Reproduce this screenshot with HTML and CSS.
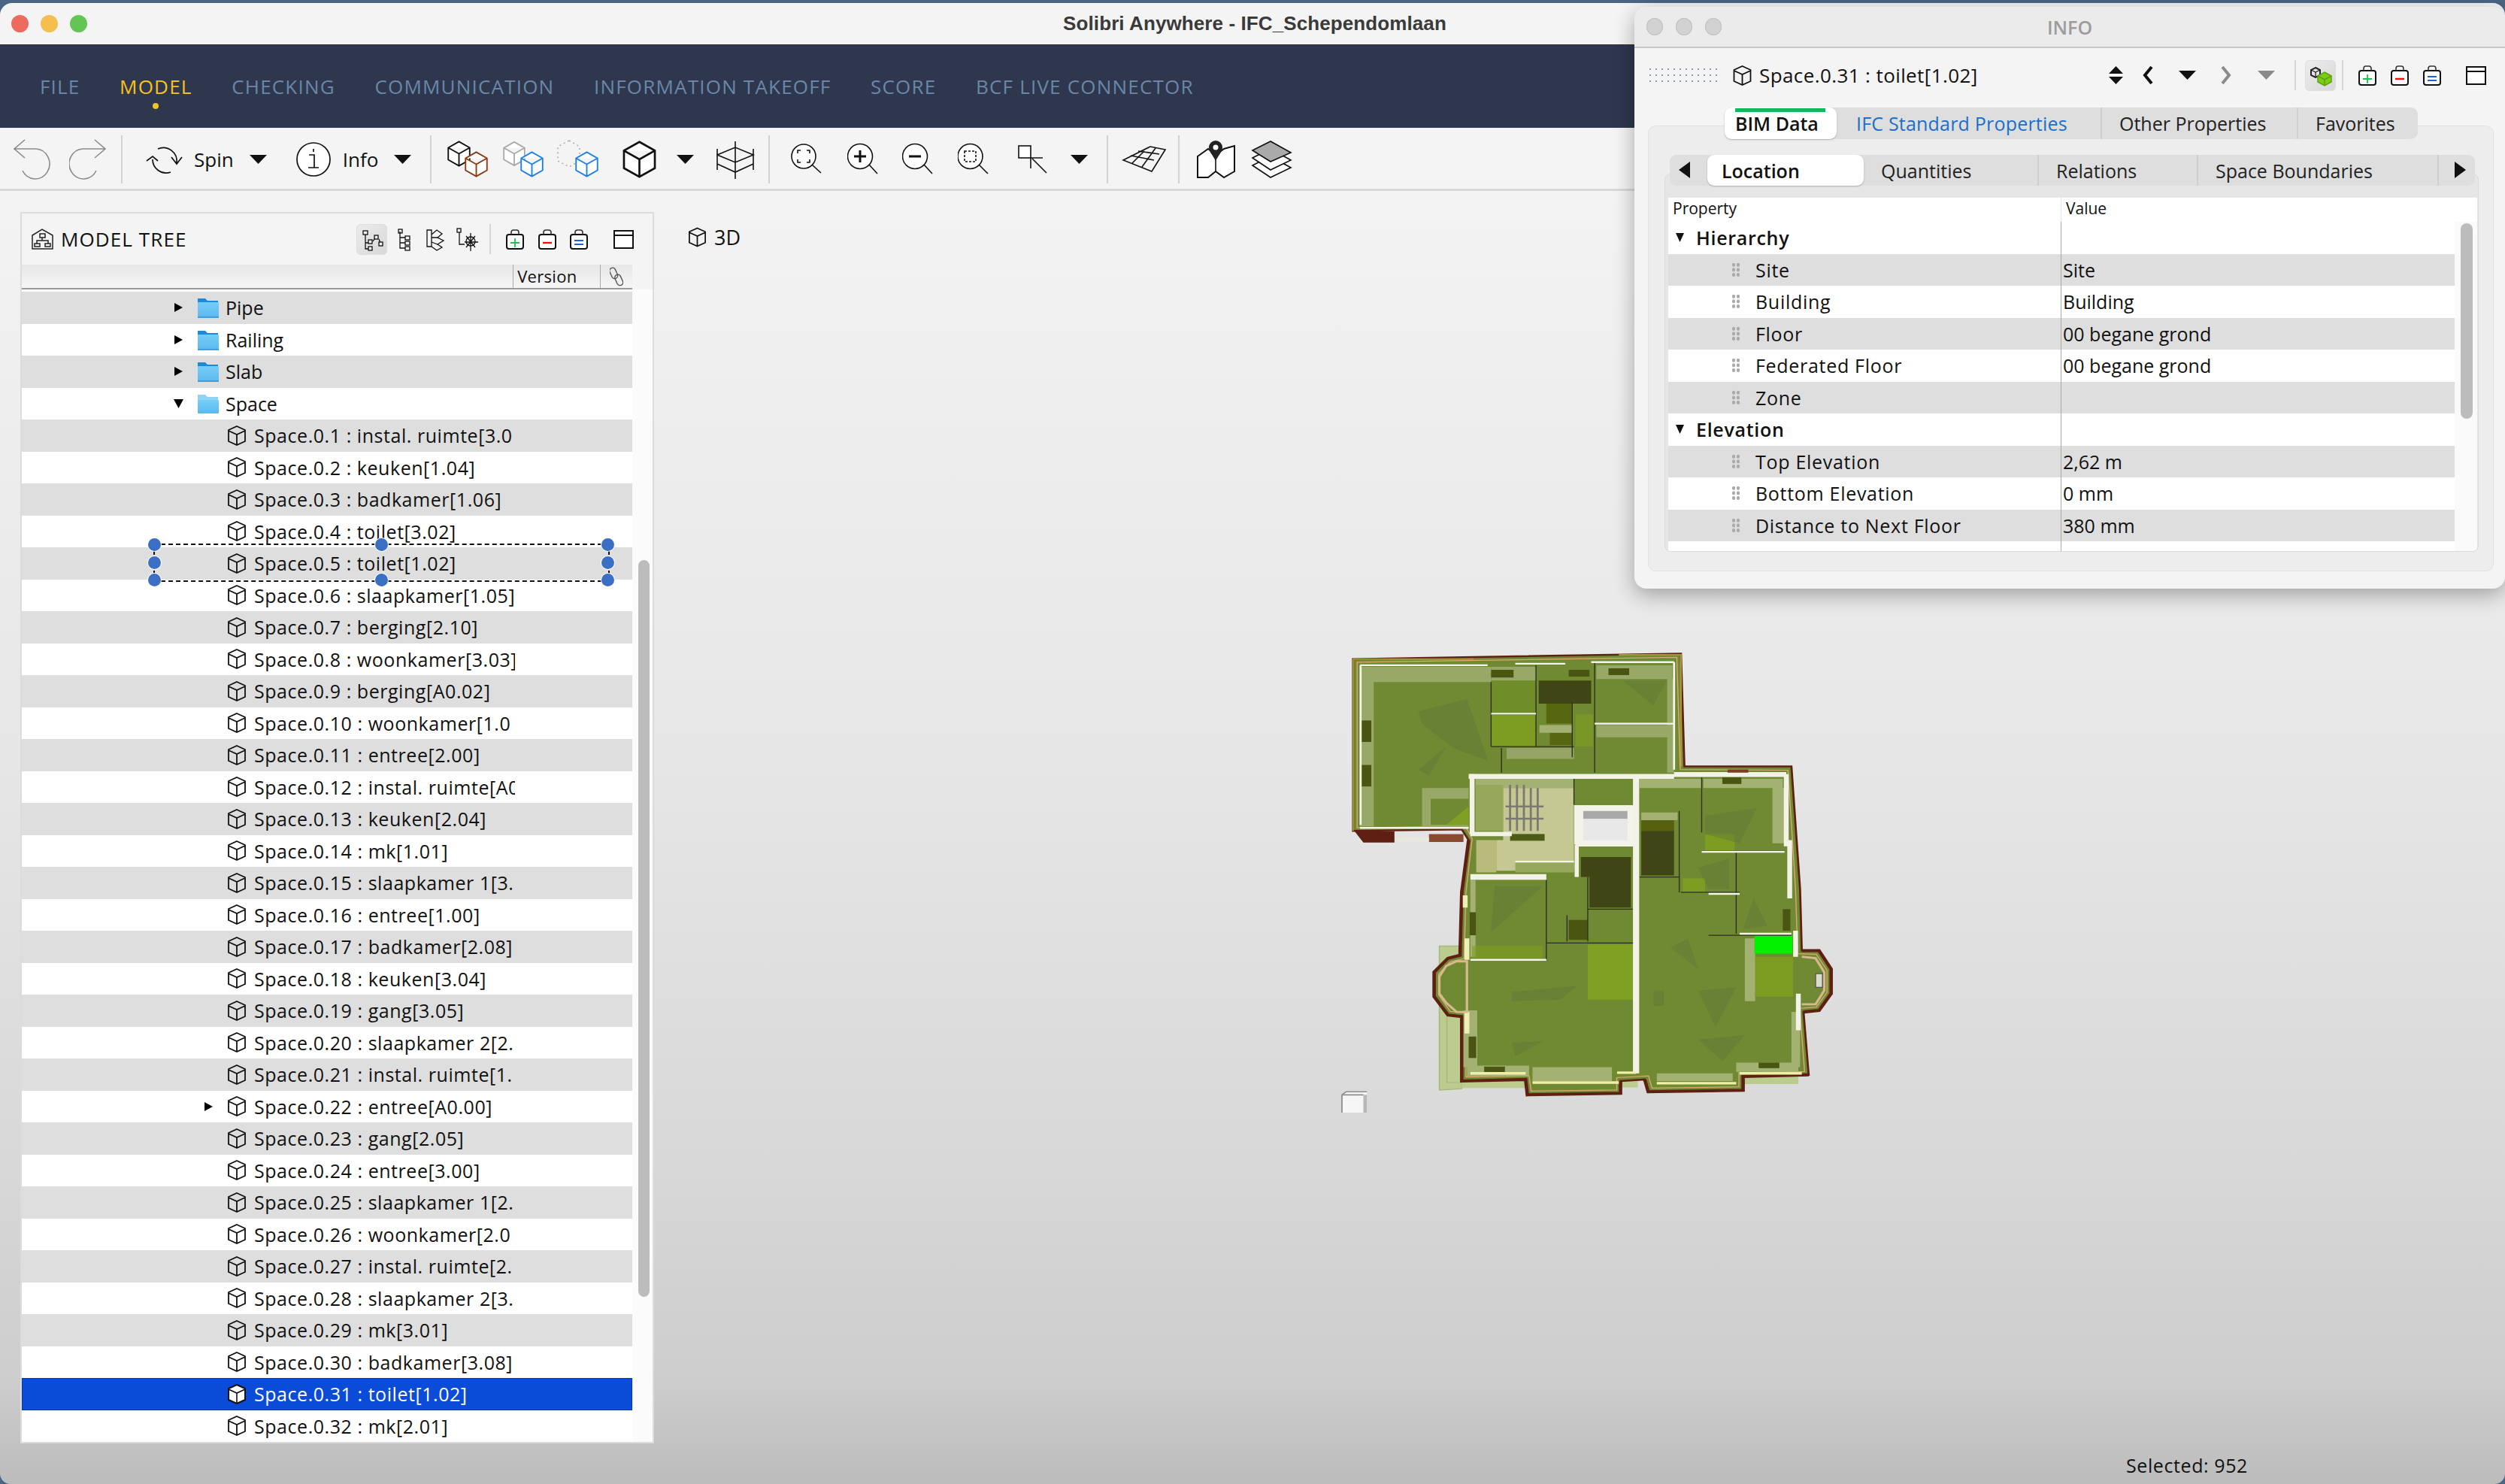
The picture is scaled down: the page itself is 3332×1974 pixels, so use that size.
FILE: index.html
```html
<!DOCTYPE html>
<html lang="en">
<head>
  <meta charset="UTF-8">
  <title>Solibri Anywhere - IFC_Schependomlaan</title>
  <link rel="stylesheet" href="styles.css">
</head>
<body>
  <svg class="defs" width="0" height="0">
    <symbol id="cube" viewBox="0 0 50 56">
      <path d="M25 2 48 15V41L25 54 2 41V15Z M2 15 25 28 48 15M25 28V54" fill="#fff" stroke="currentColor" stroke-width="3"/>
    </symbol>
    <symbol id="leaf" viewBox="0 0 28 27">
      <path d="M14 1 25 6V21L14 26 3 21V6Z M3 7 14 12 25 7M14 12V26" fill="none" stroke="currentColor" stroke-width="1.8"/>
    </symbol>
    <symbol id="leaf-sel" viewBox="0 0 28 27">
      <path d="M14 1 25 6V21L14 26 3 21V6Z" fill="#fff" stroke="#111" stroke-width="2"/>
      <path d="M3 7 14 12 25 7M14 12V26" fill="none" stroke="#111" stroke-width="1.6"/>
    </symbol>
    <linearGradient id="fold" x1="0" y1="0" x2="0" y2="1">
      <stop offset="0" stop-color="#76cdf8"/><stop offset="1" stop-color="#5cb9ef"/>
    </linearGradient>
    <symbol id="folder" viewBox="0 0 29 28">
      <path d="M1 2H11L14 5H28V27H1Z" fill="#1c8ad8"/>
      <rect x="1" y="7" width="28" height="20" rx="1" fill="url(#fold)"/>
      <rect x="1" y="26" width="28" height="2" fill="#3d9fe0"/>
    </symbol>
    <symbol id="folder-open" viewBox="0 0 29 28">
      <path d="M1 2H11L14 5H28V27H1Z" fill="#8fd3f7"/>
      <rect x="1" y="9" width="28" height="18" rx="1" fill="url(#fold)"/>
    </symbol>
    <symbol id="clip" viewBox="0 0 24 27">
      <rect x="1" y="7" width="22" height="19" rx="3" fill="#fff" stroke="#111" stroke-width="2"/>
      <path d="M7 7V4A3 3 0 0 1 10 1H14A3 3 0 0 1 17 4V7" fill="none" stroke="#333" stroke-width="1.6"/>
    </symbol>
    <symbol id="win" viewBox="0 0 27 25">
      <rect x="1" y="1" width="25" height="23" fill="#fff" stroke="#111" stroke-width="2"/>
      <path d="M1 7H26" stroke="#111" stroke-width="2"/>
    </symbol>
    <symbol id="caret" viewBox="0 0 23 12">
      <path d="M0 0H23L11.5 12Z" fill="#111"/>
    </symbol>
  </svg>

  <div class="app">
    <div class="titlebar">
      <span class="light red"></span><span class="light yellow"></span><span class="light green"></span>
      <span class="title">Solibri Anywhere - IFC_Schependomlaan</span>
    </div>

    <nav class="nav">
      <a>FILE</a>
      <a class="active">MODEL</a>
      <a>CHECKING</a>
      <a>COMMUNICATION</a>
      <a>INFORMATION TAKEOFF</a>
      <a>SCORE</a>
      <a>BCF LIVE CONNECTOR</a>
    </nav>

    <div class="toolbar">
      <svg width="74" height="81" fill="none" stroke="#8a8a8a" stroke-width="1.6"><path d="M15 14 1 26 15 38M1 26H30A19 20 0 1 1 12 55"/></svg>
      <svg width="69" height="81" fill="none" stroke="#8a8a8a" stroke-width="1.6"><path d="M34 14 48 26 34 38M48 26H18A19 20 0 1 0 36 55"/></svg>
      <div class="sep"></div>
      <svg width="81" height="81" fill="none" stroke="#111" stroke-width="1.7"><path d="M33 26A18 18 0 0 1 58 45M51 37 58 46 65 37M26 40A18 18 0 0 0 50 57M18 42 26 36 33 42"/></svg>
      <span class="tool-label">Spin</span>
      <svg width="61" height="81"><use href="#caret" x="0" y="34" width="23" height="12"/></svg>
      <svg width="63" height="81"><circle cx="24" cy="40" r="22" fill="#fff" stroke="#111" stroke-width="1.7"/><path d="M24 26V30M18 34H25V51M17 51H31" fill="none" stroke="#111" stroke-width="1.7"/></svg>
      <span class="tool-label">Info</span>
      <svg width="48" height="81"><use href="#caret" x="0" y="34" width="23" height="12"/></svg>
      <div class="sep"></div>
      <svg width="79" height="81"><use href="#cube" class="c-black" x="7" y="15" width="31" height="35"/><use href="#cube" class="c-brown" x="30" y="29" width="31" height="35"/></svg>
      <svg width="73" height="81"><use href="#cube" class="c-grey" x="2" y="15" width="30" height="35"/><use href="#cube" class="c-blue" x="25" y="29" width="31" height="35"/></svg>
      <svg width="85" height="81"><path d="M17 15 31 23V42L17 50 2 42V23Z" fill="none" stroke="#aaa" stroke-width="1.5" stroke-dasharray="2 4"/><use href="#cube" class="c-blue" x="25" y="29" width="31" height="35"/></svg>
      <svg width="75" height="81"><use href="#cube" class="c-black" x="0" y="15" width="51" height="50"/></svg>
      <svg width="53" height="81"><use href="#caret" x="0" y="34" width="23" height="12"/></svg>
      <svg width="69" height="81" fill="none" stroke="#111" stroke-width="1.6"><path d="M1 26V54M49 26V54M25 16V66M1 34 25 24 49 34 25 44ZM1 46 25 57 49 46"/></svg>
      <div class="sep"></div>
      <svg width="89" height="81" fill="none" stroke="#111" stroke-width="1.6"><circle cx="31" cy="36" r="16" fill="#fff"/><path d="M42 47 54 58M23 32V28H27M35 28H39V32M39 40V44H35M27 44H23V40"/></svg>
      <svg width="73" height="81" fill="none" stroke="#111" stroke-width="1.6"><circle cx="17" cy="36" r="16.5" fill="#fff"/><path d="M29 47 40 59"/><path d="M9 36H25M17 28V44" stroke-width="3"/></svg>
      <svg width="74" height="81" fill="none" stroke="#111" stroke-width="1.6"><circle cx="17" cy="36" r="16.5" fill="#fff"/><path d="M29 47 40 59"/><path d="M9 36H25" stroke-width="3"/></svg>
      <svg width="80" height="81" fill="none" stroke="#111" stroke-width="1.6"><circle cx="16.5" cy="36" r="16.5" fill="#fff"/><path d="M28 47 40 59"/><rect x="9" y="29" width="15" height="14" stroke-dasharray="3 2"/></svg>
      <svg width="70" height="81" fill="none" stroke="#111" stroke-width="1.6"><rect x="1" y="22" width="16" height="16" fill="#fff"/><path d="M17 38H33M17 38V52M19 39 38 58"/></svg>
      <svg width="48" height="81"><use href="#caret" x="0" y="34" width="23" height="12"/></svg>
      <div class="sep"></div>
      <svg width="79" height="81" fill="none" stroke="#111" stroke-width="1.6"><path d="M6 41 42 23 62 27 44 56ZM16 35 47 41M26 29 54 33M18 45 34 29M31 50 49 25"/></svg>
      <div class="sep"></div>
      <svg width="81" height="81"><path d="M10 36 24 26 34 34 45 26 59 22V56L45 64 34 56 24 64 10 64Z" fill="#fff" stroke="#111" stroke-width="2"/><path d="M34 34V56" stroke="#111" stroke-width="1.6"/><path d="M34 42C30 34 25 30 25 24A9 9 0 0 1 43 24C43 30 38 34 34 42Z" fill="#222"/><circle cx="34" cy="24" r="3.5" fill="#fff"/></svg>
      <svg width="56" height="81" stroke="#111" stroke-width="1.6"><path d="M2 48 26 36 53 51 26 64Z" fill="#fff"/><path d="M2 38 26 26 53 41 26 54Z" fill="#fff"/><path d="M2 28 26 16 53 31 26 43Z" fill="#aaa"/></svg>
    </div>

    <div class="content">
      <section class="tree-panel">
        <header class="tree-head">
          <svg class="tree-logo" width="29" height="28" fill="none" stroke="#222" stroke-width="1.5"><path d="M1 27V9L14 1 28 9V27Z"/><rect x="11" y="7" width="7" height="5"/><path d="M14 12V16M7 20V16H22V20"/><rect x="4" y="20" width="7" height="4"/><rect x="18" y="20" width="7" height="4"/></svg>
          <span class="tree-title">MODEL TREE</span>
          <div class="tree-tools">
            <span class="tool-on">
              <svg width="41" height="41" fill="#f0f0f0" stroke="#111" stroke-width="1.3"><path d="M12 13V33H18M12 25H18M22 23 26 17M30 20 32 25" fill="none"/><rect x="9" y="9" width="6" height="5"/><rect x="16" y="21" width="5" height="5"/><rect x="24" y="15" width="5" height="5"/><rect x="30" y="24" width="5" height="5"/><rect x="16" y="30" width="5" height="5"/></svg>
            </span>
            <svg width="42" height="41" fill="none" stroke="#111" stroke-width="1.3"><path d="M17 10V32H24M17 18H24M17 25H24"/><rect x="15" y="7" width="5" height="5"/><rect x="24" y="16" width="6" height="5"/><rect x="24" y="23" width="6" height="5"/><rect x="24" y="30" width="6" height="5"/></svg>
            <svg width="45" height="41" fill="none" stroke="#111" stroke-width="1.3"><path d="M11 8H17V30H11ZM17 14 24 8 31 13 25 18 33 22 25 27 31 31 24 35 17 30"/><path d="M17 18 25 18M17 24 25 27"/></svg>
            <svg width="47" height="41" fill="none" stroke="#111" stroke-width="1.3"><rect x="6" y="6" width="5" height="5"/><path d="M9 11V27H16M24 12V36M16 24H34M18 16 30 31M30 16 18 31"/><circle cx="24" cy="23" r="6"/></svg>
            <div class="tool-sep"></div>
            <svg class="tsvg" width="43" height="27"><use href="#clip" width="24" height="27"/><path d="M12 12V24M6 18H18" stroke="#1cc24a" stroke-width="1.8"/></svg>
            <svg class="tsvg" width="42" height="27"><use href="#clip" width="24" height="27"/><path d="M6 18H18" stroke="#f01010" stroke-width="2.4"/></svg>
            <svg class="tsvg" width="58" height="27"><use href="#clip" width="24" height="27"/><path d="M6 15H18M6 20H18" stroke="#1d62d8" stroke-width="2"/></svg>
            <svg class="tsvg" width="27" height="25"><use href="#win" width="27" height="25"/></svg>
          </div>
        </header>

        <div class="col-head">
          <span class="col-blank"></span>
          <span class="col-version">Version</span>
          <span class="col-link">
            <svg width="18" height="26" fill="none" stroke="#555" stroke-width="1.4"><rect x="1" y="1" width="8" height="15" rx="4" transform="rotate(-24 5 8)"/><rect x="8" y="10" width="8" height="15" rx="4" transform="rotate(-24 12 17)"/></svg>
          </span>
        </div>

        <div class="tree-body">
          <div class="rows">
            <div class="row folder"><svg class="arrow" width="31" height="16"><path d="M1 2 12 8 1 14Z"/></svg><svg class="ficon" width="38" height="28"><use href="#folder" width="29" height="28"/></svg><span class="label">Pipe</span></div>
            <div class="row folder"><svg class="arrow" width="31" height="16"><path d="M1 2 12 8 1 14Z"/></svg><svg class="ficon" width="38" height="28"><use href="#folder" width="29" height="28"/></svg><span class="label">Railing</span></div>
            <div class="row folder"><svg class="arrow" width="31" height="16"><path d="M1 2 12 8 1 14Z"/></svg><svg class="ficon" width="38" height="28"><use href="#folder" width="29" height="28"/></svg><span class="label">Slab</span></div>
            <div class="row folder"><svg class="arrow" width="31" height="16"><path d="M0 2H13L6.5 14Z"/></svg><svg class="ficon" width="38" height="28"><use href="#folder-open" width="29" height="28"/></svg><span class="label">Space</span></div>
            <div class="row leaf"><svg class="cube" width="28" height="27"><use href="#leaf"/></svg><span class="label">Space.0.1 : instal. ruimte[3.0</span></div>
            <div class="row leaf"><svg class="cube" width="28" height="27"><use href="#leaf"/></svg><span class="label">Space.0.2 : keuken[1.04]</span></div>
            <div class="row leaf"><svg class="cube" width="28" height="27"><use href="#leaf"/></svg><span class="label">Space.0.3 : badkamer[1.06]</span></div>
            <div class="row leaf"><svg class="cube" width="28" height="27"><use href="#leaf"/></svg><span class="label">Space.0.4 : toilet[3.02]</span></div>
            <div class="row leaf"><svg class="cube" width="28" height="27"><use href="#leaf"/></svg><span class="label">Space.0.5 : toilet[1.02]</span></div>
            <div class="row leaf"><svg class="cube" width="28" height="27"><use href="#leaf"/></svg><span class="label">Space.0.6 : slaapkamer[1.05]</span></div>
            <div class="row leaf"><svg class="cube" width="28" height="27"><use href="#leaf"/></svg><span class="label">Space.0.7 : berging[2.10]</span></div>
            <div class="row leaf"><svg class="cube" width="28" height="27"><use href="#leaf"/></svg><span class="label">Space.0.8 : woonkamer[3.03]</span></div>
            <div class="row leaf"><svg class="cube" width="28" height="27"><use href="#leaf"/></svg><span class="label">Space.0.9 : berging[A0.02]</span></div>
            <div class="row leaf"><svg class="cube" width="28" height="27"><use href="#leaf"/></svg><span class="label">Space.0.10 : woonkamer[1.0</span></div>
            <div class="row leaf"><svg class="cube" width="28" height="27"><use href="#leaf"/></svg><span class="label">Space.0.11 : entree[2.00]</span></div>
            <div class="row leaf"><svg class="cube" width="28" height="27"><use href="#leaf"/></svg><span class="label">Space.0.12 : instal. ruimte[A0</span></div>
            <div class="row leaf"><svg class="cube" width="28" height="27"><use href="#leaf"/></svg><span class="label">Space.0.13 : keuken[2.04]</span></div>
            <div class="row leaf"><svg class="cube" width="28" height="27"><use href="#leaf"/></svg><span class="label">Space.0.14 : mk[1.01]</span></div>
            <div class="row leaf"><svg class="cube" width="28" height="27"><use href="#leaf"/></svg><span class="label">Space.0.15 : slaapkamer 1[3.</span></div>
            <div class="row leaf"><svg class="cube" width="28" height="27"><use href="#leaf"/></svg><span class="label">Space.0.16 : entree[1.00]</span></div>
            <div class="row leaf"><svg class="cube" width="28" height="27"><use href="#leaf"/></svg><span class="label">Space.0.17 : badkamer[2.08]</span></div>
            <div class="row leaf"><svg class="cube" width="28" height="27"><use href="#leaf"/></svg><span class="label">Space.0.18 : keuken[3.04]</span></div>
            <div class="row leaf"><svg class="cube" width="28" height="27"><use href="#leaf"/></svg><span class="label">Space.0.19 : gang[3.05]</span></div>
            <div class="row leaf"><svg class="cube" width="28" height="27"><use href="#leaf"/></svg><span class="label">Space.0.20 : slaapkamer 2[2.</span></div>
            <div class="row leaf"><svg class="cube" width="28" height="27"><use href="#leaf"/></svg><span class="label">Space.0.21 : instal. ruimte[1.</span></div>
            <div class="row leaf"><svg class="arrow sub" width="30" height="16"><path d="M1 2 12 8 1 14Z"/></svg><svg class="cube" width="28" height="27"><use href="#leaf"/></svg><span class="label">Space.0.22 : entree[A0.00]</span></div>
            <div class="row leaf"><svg class="cube" width="28" height="27"><use href="#leaf"/></svg><span class="label">Space.0.23 : gang[2.05]</span></div>
            <div class="row leaf"><svg class="cube" width="28" height="27"><use href="#leaf"/></svg><span class="label">Space.0.24 : entree[3.00]</span></div>
            <div class="row leaf"><svg class="cube" width="28" height="27"><use href="#leaf"/></svg><span class="label">Space.0.25 : slaapkamer 1[2.</span></div>
            <div class="row leaf"><svg class="cube" width="28" height="27"><use href="#leaf"/></svg><span class="label">Space.0.26 : woonkamer[2.0</span></div>
            <div class="row leaf"><svg class="cube" width="28" height="27"><use href="#leaf"/></svg><span class="label">Space.0.27 : instal. ruimte[2.</span></div>
            <div class="row leaf"><svg class="cube" width="28" height="27"><use href="#leaf"/></svg><span class="label">Space.0.28 : slaapkamer 2[3.</span></div>
            <div class="row leaf"><svg class="cube" width="28" height="27"><use href="#leaf"/></svg><span class="label">Space.0.29 : mk[3.01]</span></div>
            <div class="row leaf"><svg class="cube" width="28" height="27"><use href="#leaf"/></svg><span class="label">Space.0.30 : badkamer[3.08]</span></div>
            <div class="row leaf selected"><svg class="cube" width="28" height="27"><use href="#leaf-sel"/></svg><span class="label">Space.0.31 : toilet[1.02]</span></div>
            <div class="row leaf"><svg class="cube" width="28" height="27"><use href="#leaf"/></svg><span class="label">Space.0.32 : mk[2.01]</span></div>
          </div>
          <div class="track"><div class="thumb"></div></div>
        </div>
      </section>

      <div class="viewport">
        <div class="view-label">
          <svg width="27" height="27"><use href="#leaf"/></svg>
          <span>3D</span>
        </div>
        <div class="status">Selected: 952</div>
      </div>

      <!-- building picture, coordinates taken from the model view -->
      <svg class="plan" width="720" height="640" viewBox="0 0 1568 1568" preserveAspectRatio="none">
        <path d="M380 1025H445V1490L380 1495Z" fill="#bccb8e" stroke="#a6b67c" stroke-width="3"/>
        <path d="M402 1250V1470H445" fill="none" stroke="#a6b67c" stroke-width="3"/>
        <rect x="445" y="1460" width="190" height="28" fill="#bccb8e"/>
        <rect x="905" y="1460" width="50" height="26" fill="#bccb8e"/>
        <path d="M1255 1450H1420V1475H1255Z" fill="#bccb8e"/>
        <path d="M130 90 1080 72 1090 440 1400 440 1425 840 1430 1040 1480 1040 1515 1100 1515 1180 1480 1235 1435 1240 1450 1445 1260 1450 1260 1495 985 1500 975 1460 905 1465 905 1505 635 1510 630 1460 445 1465 445 1255 405 1250 365 1190 365 1110 405 1065 440 1055 445 850 465 680 445 645 130 650Z" fill="#708a33" stroke="#5e2013" stroke-width="6"/>
        <path d="M1430 1040 1480 1040 1515 1100 1515 1180 1480 1235 1435 1240M1450 1445 1260 1450 1260 1495 985 1500 975 1460M905 1465 905 1505 635 1510 630 1460 445 1465V1255L405 1250 365 1190 365 1110 405 1065 440 1055 445 850 465 680" fill="none" stroke="#5e2013" stroke-width="10"/>
        <path d="M130 90V650M130 90H480M900 76H1080V440" fill="none" stroke="#a8963a" stroke-width="5"/>
        <path d="M142 100 1068 84 1078 450 1390 452 1412 840 1418 1050 1472 1052 1503 1104 1503 1176 1472 1224 1424 1228 1438 1434 1248 1438 1248 1484 996 1488 986 1448 894 1454 894 1494 646 1498 640 1448 457 1452 457 1244 412 1238 378 1184 378 1116 412 1076 452 1066 457 852 475 676 456 635 142 640Z" fill="none" stroke="#dfa877" stroke-width="3"/>
        <path d="M150 115H530V165H190V635H150Z" fill="#98a866"/>
        <path d="M530 115H660V160H530ZM835 110H1055V155H835ZM1040 155H1060V460H1040ZM835 305H1060V345H835Z" fill="#98a866"/>
        <path d="M560 380H830V460H560Z" fill="#708a33"/>
        <path d="M575 380H770V415H575Z" fill="#96a566"/>
        <path d="M330 510H465V640H330Z" fill="#98a866"/>
        <path d="M355 545H465V630H355Z" fill="#708a33"/>
        <path d="M400 630 465 570V630Z" fill="#7f9f25"/>
        <path d="M485 480H770V510H485ZM960 480H1140V510H960ZM1145 480H1375V510H1145ZM1345 510H1385V690H1345ZM470 810H485V1060H470ZM1265 1000H1295V1205H1265ZM1400 1240H1425V1420H1400ZM450 1235H490V1420H450ZM460 1415H640V1450H460ZM650 1420H880V1465H650ZM1010 1440H1230V1465H1010ZM1240 1405H1420V1435H1240Z" fill="#a3b173"/>
        <path d="M485 500H565V650H485Z" fill="#96a85c"/>
        <path d="M565 510H770V780H545V680H565Z" fill="#c5c892"/>
        <path d="M487 680H545V785H487Z" fill="#b8bb7c"/>
        <g fill="none" stroke="#7a7a72" stroke-width="6"><path d="M585 500V650M605 500V650M625 500V650M645 510V650M665 510V650M572 570H682M572 610H682"/></g>
        <rect x="585" y="660" width="100" height="22" fill="#4e5a17"/>
        <path d="M600 750H770V785H600Z" fill="#96a85c"/>
        <path d="M668 160H820V235H668Z" fill="#3f4514"/>
        <path d="M690 235H765V300H690Z" fill="#56670f"/>
        <path d="M700 330H765V370H700Z" fill="#56670f"/>
        <path d="M670 305H765V330H670Z" fill="#a3b173"/>
        <path d="M965 590H1070V615H965Z" fill="#a3b173"/>
        <path d="M965 615H1060V650H965Z" fill="#56600e"/>
        <path d="M965 650H1060V795H965Z" fill="#3f4514"/>
        <path d="M790 735H935V800H790ZM815 800H935V900H815Z" fill="#3f4514"/>
        <path d="M755 940H810V1005H755Z" fill="#4a5512"/>
        <path d="M530 270H660V375H530Z" fill="#7d9d22"/>
        <path d="M530 160H660V270H530Z" fill="#6f9021" opacity=".55"/>
        <path d="M775 270H825V375H775Z" fill="#7d9d22" opacity=".7"/>
        <path d="M810 1020H945V1200H810Z" fill="#80a022"/>
        <path d="M1295 1060H1405V1190H1295Z" fill="#7d9d22"/>
        <path d="M1085 805H1150V850H1085ZM1150 660H1235V715H1150Z" fill="#7d9d22"/>
        <path d="M475 1025H680V1065H475Z" fill="#7d9d22" opacity=".6"/>
        <g fill="#5f7537" opacity=".45">
          <path d="M320 260 460 220 520 420 420 380 330 300ZM320 450 400 375 350 470ZM1150 600 1300 575 1250 690 1150 660ZM1130 1170 1240 1160 1180 1290ZM1130 1330 1265 1315 1200 1400ZM590 1175 780 1155 730 1200 590 1205ZM590 1340 680 1335 600 1385ZM1000 1170H1030V1220H1000ZM1100 1000 1130 1100 1050 1030ZM540 830 680 830 530 980ZM1130 770 1220 740V840H1160ZM910 160 1040 160 1000 240ZM1290 870 1330 960 1260 970Z"/>
        </g>
        <rect x="775" y="570" width="170" height="120" fill="#f3f3ea" stroke="#f3f3ea" stroke-width="8"/>
        <rect x="797" y="585" width="128" height="26" fill="#a9a9a9"/>
        <rect x="797" y="611" width="128" height="70" fill="#e8e8e8"/>
        <rect x="1293" y="990" width="110" height="60" fill="#00f000"/>
        <rect x="155" y="290" width="28" height="70" fill="#4a5512"/>
        <rect x="155" y="435" width="28" height="70" fill="#4a5512"/>
        <rect x="468" y="915" width="18" height="75" fill="#4a5512"/>
        <rect x="465" y="1320" width="22" height="70" fill="#4a5512"/>
        <rect x="1375" y="905" width="22" height="70" fill="#4a5512"/>
        <rect x="530" y="125" width="65" height="25" fill="#4a5512"/>
        <rect x="755" y="125" width="60" height="22" fill="#4a5512"/>
        <rect x="870" y="120" width="60" height="22" fill="#4a5512"/>
        <rect x="1200" y="475" width="55" height="22" fill="#4a5512"/>
        <rect x="510" y="1418" width="60" height="20" fill="#4a5512"/>
        <rect x="1305" y="1405" width="60" height="18" fill="#4a5512"/>
        <g fill="none" stroke="#2c2f1e" stroke-width="3">
          <path d="M660 110V375M830 100V460M830 298H1060M530 270H660M530 375H770M765 230V410M1075 585V850M1140 475V655M1240 715V985M1140 715H1380M1080 850H1250M1160 990H1400M690 810V1070M470 1070H690M810 905H940M690 1015H945M750 925V1010M810 800V1010M770 480V565M530 165V375M560 380V460M960 800H1075"/>
        </g>
        <g fill="none" stroke="#f4f5e8" stroke-width="6">
          <path d="M150 110H520M600 105H745M820 100H1060M152 110V630M1060 100V450M150 640H465M830 300H1060M530 268H660M1140 718H1380M1250 985H1400M1160 855H1250M690 1070H470M600 750H770"/>
        </g>
        <g fill="none" stroke="#f2f3e6">
          <path d="M465 472H1060M1060 466H1385" stroke-width="16"/>
          <path d="M950 480V1440" stroke-width="18"/>
          <path d="M475 465V660M470 660H590" stroke-width="14"/>
          <path d="M470 800H690" stroke-width="18"/>
          <path d="M1385 465V700M1395 680V870M1412 975V1060M1420 1180V1300" stroke-width="14"/>
          <path d="M455 860V900M460 1000V1070M460 1240V1310" stroke-width="14" stroke="#eef0b8"/>
          <path d="M470 1440H630M650 1470H900M1010 1472H1240M1250 1440H1430M895 1438H950" stroke-width="8" stroke="#eef0a8"/>
          <path d="M778 695V800" stroke-width="12"/>
          <path d="M775 695H945" stroke-width="12"/>
        </g>
        <rect x="1215" y="450" width="60" height="10" fill="#7d3d22"/>
        <path d="M135 652H250V688H160Z" fill="#5e2013"/>
        <path d="M350 660H450V686H350Z" fill="#8a4a30"/>
        <path d="M258 672H350V684H258Z" fill="#e9e9dd"/>
        <path d="M430 1075H460V1240H430L400 1210 380 1180V1125L400 1090Z" fill="none" stroke="#d6b98c" stroke-width="7"/>
        <path d="M1430 1060 1470 1065 1495 1110V1170L1470 1215H1430" fill="none" stroke="#d6b98c" stroke-width="7"/>
        <path d="M1470 1115H1490V1160H1470Z" fill="#dcdcc8" stroke="#555" stroke-width="3"/>
        <g>
          <path d="M98 1510 110 1500H170V1568H98Z" fill="#f6f6f6"/>
          <path d="M160 1510H170V1568H160Z" fill="#b8b8b8"/>
          <path d="M98 1510H160M98 1510V1568M98 1510 110 1500H170" fill="none" stroke="#8f8f8f" stroke-width="4"/>
        </g>
      </svg>
    </div>
  </div>

  <!-- row handles drawn over the tree -->
  <div class="selection">
    <i class="handle h-tl"></i><i class="handle h-tm"></i><i class="handle h-tr"></i>
    <i class="handle h-ml"></i><i class="handle h-mr"></i>
    <i class="handle h-bl"></i><i class="handle h-bm"></i><i class="handle h-br"></i>
  </div>

  <div class="info-window">
    <div class="info-title">
      <span class="light off"></span><span class="light off"></span><span class="light off"></span>
      <span class="info-name">INFO</span>
    </div>
    <div class="info-head">
      <div class="grip"></div>
      <svg class="info-cube" width="29" height="27"><use href="#leaf"/></svg>
      <span class="info-sel">Space.0.31 : toilet[1.02]</span>
      <div class="info-tools">
        <svg width="45" height="40"><path d="M0 18H19L9.5 8ZM0 22H19L9.5 32Z" fill="#111"/></svg>
        <svg width="48" height="40"><path d="M12 9 3 20 12 31" fill="none" stroke="#111" stroke-width="4"/></svg>
        <svg width="56" height="40"><use href="#caret" x="0" y="14" width="23" height="12"/></svg>
        <svg width="49" height="40"><path d="M2 9 11 20 2 31" fill="none" stroke="#8a8a8a" stroke-width="4"/></svg>
        <svg width="49" height="40"><path d="M0 14H23L11.5 26Z" fill="#8a8a8a"/></svg>
        <div class="tool-sep"></div>
        <span class="tool-on info-on">
          <svg width="41" height="41"><path d="M14 10 20 13V20L14 23 8 20V13Z" fill="none" stroke="#222" stroke-width="2"/><path d="M8 13 14 16 20 13M14 16V23" fill="none" stroke="#222" stroke-width="1.3"/><path d="M26 16 35 21V29L26 34 17 29V21Z" fill="#7ccb16" stroke="#5ea30c" stroke-width="1.5"/><path d="M17 21 26 26 35 21M26 26V34" fill="none" stroke="#5ea30c" stroke-width="1.5"/></svg>
        </span>
        <div class="tool-sep"></div>
        <svg class="tsvg" width="43" height="27"><use href="#clip" width="24" height="27"/><path d="M12 12V24M6 18H18" stroke="#1cc24a" stroke-width="1.8"/></svg>
        <svg class="tsvg" width="43" height="27"><use href="#clip" width="24" height="27"/><path d="M6 18H18" stroke="#f01010" stroke-width="2.4"/></svg>
        <svg class="tsvg" width="57" height="27"><use href="#clip" width="24" height="27"/><path d="M6 15H18M6 20H18" stroke="#1d62d8" stroke-width="2"/></svg>
        <svg class="tsvg" width="27" height="25"><use href="#win" width="27" height="25"/></svg>
      </div>
    </div>

    <div class="tabs tabs-outer">
      <span class="tab on bim">BIM Data</span>
      <span class="tab link">IFC Standard Properties</span>
      <span class="tab">Other Properties</span>
      <span class="tab last">Favorites</span>
    </div>

    <div class="info-panel">
      <div class="tabs tabs-inner">
        <svg class="tab-arrow" width="50" height="41"><path d="M27 9V31L12 20Z" fill="#111"/></svg>
        <span class="tab on">Location</span>
        <span class="tab">Quantities</span>
        <span class="tab">Relations</span>
        <span class="tab">Space Boundaries</span>
        <svg class="tab-arrow" width="48" height="41"><path d="M21 9V31L36 20Z" fill="#111"/></svg>
      </div>

      <div class="info-inner">
        <div class="prop-head"><span class="prop-name">Property</span><span class="prop-val">Value</span></div>
        <div class="prop-body">
          <div class="prop-rows">
            <div class="prop group"><span class="prop-name"><svg width="28" height="14"><path d="M1 1H12L6.5 13Z"/></svg>Hierarchy</span><span class="prop-val"></span></div>
            <div class="prop"><span class="prop-name"><i class="dots"></i>Site</span><span class="prop-val">Site</span></div>
            <div class="prop"><span class="prop-name"><i class="dots"></i>Building</span><span class="prop-val">Building</span></div>
            <div class="prop"><span class="prop-name"><i class="dots"></i>Floor</span><span class="prop-val">00 begane grond</span></div>
            <div class="prop"><span class="prop-name"><i class="dots"></i>Federated Floor</span><span class="prop-val">00 begane grond</span></div>
            <div class="prop"><span class="prop-name"><i class="dots"></i>Zone</span><span class="prop-val"></span></div>
            <div class="prop group"><span class="prop-name"><svg width="28" height="14"><path d="M1 1H12L6.5 13Z"/></svg>Elevation</span><span class="prop-val"></span></div>
            <div class="prop"><span class="prop-name"><i class="dots"></i>Top Elevation</span><span class="prop-val">2,62 m</span></div>
            <div class="prop"><span class="prop-name"><i class="dots"></i>Bottom Elevation</span><span class="prop-val">0 mm</span></div>
            <div class="prop"><span class="prop-name"><i class="dots"></i>Distance to Next Floor</span><span class="prop-val">380 mm</span></div>
            <div class="prop"><span class="prop-name"></span><span class="prop-val"></span></div>
          </div>
          <div class="prop-track"><div class="prop-thumb"></div></div>
        </div>
      </div>
    </div>
  </div>
</body>
</html>
```

FILE: styles.css
```css
html, body {
  margin: 0;
  padding: 0;
}

body {
  position: relative;
  width: 3332px;
  height: 1974px;
  overflow: hidden;
  padding-top: 4px;
  box-sizing: border-box;
  background: #4a6684;
  font-family: "Open Sans", "Liberation Sans", sans-serif;
  font-size: 25px;
  color: #111;
}

.defs {
  position: absolute;
}

svg {
  display: block;
  flex: none;
}

.c-black { color: #111; }
.c-brown { color: #8a3a10; }
.c-grey { color: #a8a8a8; }
.c-blue { color: #1c7fe6; }

.app {
  display: flex;
  flex-direction: column;
  height: 1970px;
  border-radius: 16px 16px 14px 14px;
  overflow: hidden;
}

/* title bar */
.titlebar {
  position: relative;
  display: flex;
  align-items: center;
  height: 55px;
  padding-left: 15px;
  background: #f4f4f4;
  border-bottom: 1px solid #333;
  flex: none;
}

.light {
  width: 23px;
  height: 23px;
  border-radius: 50%;
  margin-right: 16px;
}

.red { background: #ed6a5e; }
.yellow { background: #f5bf4f; }
.green { background: #62c554; }

.title {
  position: absolute;
  left: 6px;
  right: 0;
  text-align: center;
  font-family: "Liberation Sans", sans-serif;
  font-weight: bold;
  font-size: 26px;
  letter-spacing: .1px;
  color: #3a3a3a;
}

/* main menu */
.nav {
  display: flex;
  align-items: center;
  gap: 52.6px;
  height: 110px;
  padding-left: 53px;
  background: #2e374d;
  flex: none;
}

.nav a {
  position: relative;
  font-size: 26px;
  letter-spacing: 1.2px;
  color: #6a87a8;
}

.nav a.active {
  color: #f6c21c;
}

.nav a.active::after {
  content: "";
  position: absolute;
  left: 50%;
  top: 40px;
  width: 8px;
  height: 8px;
  margin-left: -4px;
  border-radius: 50%;
  background: #f6c21c;
}

/* toolbar */
.toolbar {
  display: flex;
  align-items: center;
  height: 84px;
  padding: 3px 0 0 18px;
  box-sizing: border-box;
  background: #f4f4f4;
  border-bottom: 3px solid #d8d8d8;
  flex: none;
}

.sep {
  width: 2px;
  height: 64px;
  margin-right: 14px;
  background: #d2d2d2;
  flex: none;
}

.tool-label {
  margin-right: 21px;
  font-size: 26px;
  color: #111;
}

/* content area */
.content {
  position: relative;
  display: flex;
  flex: 1;
  min-height: 0;
  padding: 28px 0 0 27px;
  background: linear-gradient(#f3f3f3 0%, #e6e6e6 45%, #d8d8d8 75%, #cdcdcd 92%, #bcbcbc 100%);
}

.tree-panel {
  display: flex;
  flex-direction: column;
  width: 843px;
  height: 1638px;
  border: 2px solid #dcdcdc;
  box-sizing: border-box;
  background: #f4f4f4;
  overflow: hidden;
  flex: none;
}

.tree-head {
  display: flex;
  align-items: center;
  height: 68px;
  padding: 0 25px 0 13px;
  flex: none;
}

.tree-logo {
  margin-right: 10px;
}

.tree-title {
  font-size: 26px;
  letter-spacing: 1.1px;
}

.tree-tools {
  display: flex;
  align-items: center;
  margin-left: auto;
}

.tool-on {
  width: 41px;
  height: 41px;
  border-radius: 6px;
  background: linear-gradient(135deg, #ececec, #d8d8d8);
  box-shadow: inset 0 0 0 1px #dedede;
  flex: none;
}

.tool-sep {
  width: 2px;
  height: 40px;
  margin: 0 20px 0 2px;
  background: #d6d6d6;
  flex: none;
}

.col-head {
  display: flex;
  width: 812px;
  height: 33px;
  box-sizing: border-box;
  border-bottom: 2px solid #9a9a9a;
  background: linear-gradient(#e6e6e6, #f6f6f6);
  font-size: 22px;
  flex: none;
}

.col-blank {
  width: 654px;
}

.col-version {
  width: 116px;
  padding-left: 5px;
  box-sizing: border-box;
  line-height: 30px;
  letter-spacing: .3px;
  border-left: 1px solid #aaa;
}

.col-link {
  display: flex;
  align-items: center;
  justify-content: center;
  width: 42px;
  border-left: 1px solid #aaa;
}

.tree-body {
  display: flex;
  flex: 1;
  min-height: 0;
  background: #fbfbfb;
}

.rows {
  width: 812px;
  margin-top: 3px;
  flex: none;
}

.row {
  display: flex;
  align-items: center;
  height: 42.5px;
  padding-right: 156px;
  box-sizing: border-box;
  background: #fff;
}

.row:nth-child(odd) {
  background: #dedede;
}

.row.folder {
  padding-left: 202px;
}

.row.leaf {
  padding-left: 272px;
}

.cube {
  margin-right: 9px;
}

.arrow.sub {
  margin-left: -30px;
}

.label {
  overflow: hidden;
  white-space: nowrap;
  color: #111;
}

.row.leaf .label {
  letter-spacing: .55px;
}

.row.selected {
  background: #0a4bd8;
  box-shadow: inset 0 0 0 1px #0a2fd0;
}

.row.selected .label {
  color: #fff;
}

.track {
  flex: 1;
}

.thumb {
  width: 15px;
  height: 980px;
  margin: 360px 0 0 8px;
  border-radius: 8px;
  background: #bcbcbc;
}

.viewport {
  display: flex;
  flex-direction: column;
  flex: 1;
  padding: 15px 342px 8px 44px;
}

.view-label {
  display: flex;
  align-items: center;
  gap: 9px;
  font-size: 27px;
}

.status {
  margin-top: auto;
  align-self: flex-end;
  font-size: 25px;
  letter-spacing: .6px;
}

.plan {
  position: absolute;
  left: 1740px;
  top: 586px;
  overflow: visible;
}

/* selection overlay */
.selection {
  position: absolute;
  left: 204px;
  top: 723px;
  width: 607px;
  height: 51px;
  border: 2px dashed #111;
  box-sizing: border-box;
}

.handle {
  position: absolute;
  width: 17px;
  height: 17px;
  margin: -9px 0 0 -9px;
  border-radius: 50%;
  background: #3a6fc4;
  box-shadow: 0 0 0 1px #fff;
}

.h-tl { left: 0; top: 0; }
.h-tm { left: 50%; top: 0; }
.h-tr { left: 100%; top: 0; }
.h-ml { left: 0; top: 50%; }
.h-mr { left: 100%; top: 50%; }
.h-bl { left: 0; top: 100%; }
.h-bm { left: 50%; top: 100%; }
.h-br { left: 100%; top: 100%; }

/* info window */
.info-window {
  position: absolute;
  left: 2174px;
  top: 9px;
  width: 1158px;
  height: 774px;
  border-radius: 16px;
  background: #f4f4f4;
  box-shadow: 0 8px 28px rgba(0, 0, 0, .32);
  overflow: hidden;
}

.info-title {
  position: relative;
  display: flex;
  align-items: center;
  height: 55px;
  padding-left: 16px;
  background: #ebebeb;
  border-bottom: 2px solid #c8c8c8;
  box-sizing: border-box;
}

.light.off {
  width: 22px;
  height: 23px;
  margin-right: 17px;
  background: #d2d2d2;
  box-shadow: inset 0 0 0 1px #c2c2c2;
}

.info-name {
  position: absolute;
  left: 0;
  right: 0;
  text-align: center;
  font-size: 25px;
  font-weight: 600;
  color: #9c9c9c;
}

.info-head {
  display: flex;
  align-items: center;
  height: 72px;
  margin-bottom: 7px;
  padding: 0 25px 0 17px;
}

.grip {
  width: 94px;
  height: 24px;
  margin-right: 18px;
  background: radial-gradient(circle, #8a9ab0 1px, transparent 1.4px) 0 0 / 8px 8px;
}

.info-cube {
  margin-right: 8px;
}

.info-sel {
  font-size: 26px;
  letter-spacing: .4px;
}

.info-tools {
  display: flex;
  align-items: center;
  margin-left: auto;
}

.info-tools .tool-sep {
  margin: 0 12px 0 0;
}

.info-on {
  margin-right: 8px;
}

.info-on + .tool-sep {
  margin-right: 20px;
}

.tabs {
  display: grid;
  align-items: center;
  border-radius: 9px;
  background: #dedede;
}

.tabs-outer {
  position: relative;
  z-index: 1;
  grid-template-columns: 149px 353px 261px 1fr;
  width: 922px;
  height: 42px;
  margin: 0 0 -18px 120px;
}

.tabs-inner {
  position: relative;
  z-index: 1;
  grid-template-columns: 50px 208px 233px 212px 320px 1fr;
  width: 1071px;
  height: 41px;
  margin: 0 0 -16px 28px;
}

.tab {
  display: flex;
  align-items: center;
  height: 100%;
  padding-left: 23px;
  box-sizing: border-box;
  border-right: 2px solid #cfcfcf;
  font-size: 25px;
  color: #222;
}

.tab.last {
  border-right: none;
}

.tab.link {
  padding-left: 26px;
  letter-spacing: .2px;
  color: #1b6fc9;
}

.tab.on {
  position: relative;
  padding-left: 19px;
  border: none;
  border-radius: 9px;
  background: #fff;
  box-shadow: 0 1px 2px rgba(0, 0, 0, .25);
  font-weight: 600;
  color: #111;
}

.tab.bim {
  padding-left: 14px;
}

.tab.bim::before {
  content: "";
  position: absolute;
  left: 14px;
  top: 1px;
  width: 120px;
  height: 5px;
  background: #12b85c;
}

.info-panel {
  width: 1125px;
  height: 593px;
  margin-left: 18px;
  padding-top: 38px;
  box-sizing: border-box;
  border: 1px solid #e2e2e2;
  border-radius: 10px;
  background: #ededed;
}

.info-inner {
  width: 1083px;
  height: 503px;
  margin-left: 21px;
  padding: 31px 1px 0 4px;
  box-sizing: border-box;
  border: 1px solid #dadada;
  border-radius: 8px;
  background: #e6e6e6;
  overflow: hidden;
}

.prop-head {
  display: flex;
  height: 32px;
  background: #fff;
  font-size: 21px;
}

.prop-head .prop-name {
  padding-left: 6px;
}

.prop-head .prop-val {
  padding-left: 6px;
}

.prop-head span {
  padding-bottom: 5px;
}

.prop-body {
  display: flex;
}

.prop-rows {
  width: 1046px;
  height: 439px;
  overflow: hidden;
  flex: none;
}

.prop {
  display: flex;
  height: 42.5px;
  background: #fff;
}

.prop:nth-child(even) {
  background: #dedede;
}

.prop-name {
  display: flex;
  align-items: center;
  width: 523px;
  padding-left: 116px;
  box-sizing: border-box;
  border-right: 1px solid #aaa;
  letter-spacing: .7px;
  flex: none;
}

.prop-head .prop-name {
  border-right: 1px solid #e4e4e4;
  letter-spacing: 0;
}

.prop-val {
  display: flex;
  align-items: center;
  padding-left: 2px;
}

.group .prop-name {
  padding-left: 9px;
  font-weight: 600;
}

.group svg {
  fill: #111;
}

.dots {
  width: 12px;
  height: 20px;
  margin: 0 20px 0 -32px;
  background: radial-gradient(#aaa 50%, transparent 56%) 0 0 / 6px 6.6px;
}

.prop-track {
  flex: 1;
  background: #fafafa;
}

.prop-thumb {
  width: 16px;
  height: 260px;
  margin: 2px 0 0 8px;
  border-radius: 8px;
  background: #bcbcbc;
}
```
